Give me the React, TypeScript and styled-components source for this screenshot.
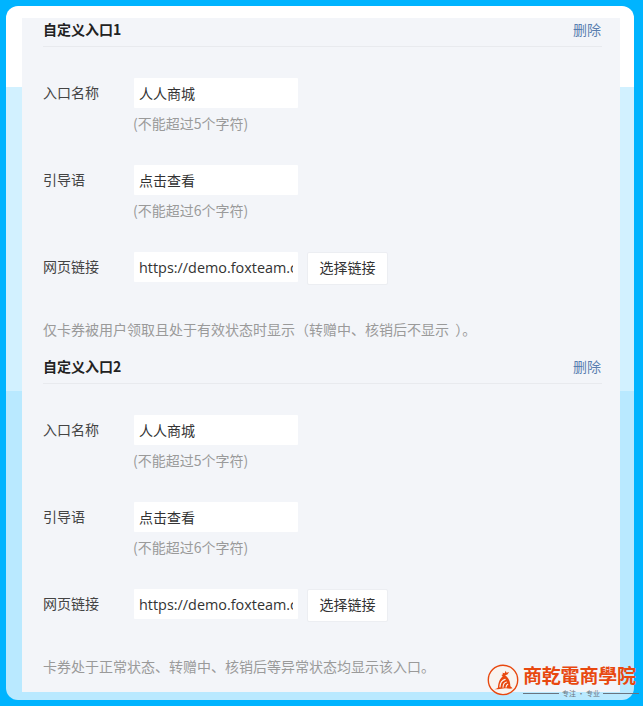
import React from "react";
import styled, { createGlobalStyle } from "styled-components";

const Global = createGlobalStyle`
  html, body { margin: 0; padding: 0; background: #00b4ff; }
  body { font-family: "Open Sans", "Noto Sans CJK SC", sans-serif; font-size: 14px; }
`;

const Frame = styled.div`
  position: relative;
  box-sizing: border-box;
  width: 643px;
  height: 706px;
  overflow: hidden;
  background: #00b4ff;
  padding: 6px 9px 6px 6px;
`;

const Screen = styled.div`
  box-sizing: border-box;
  height: 694px;
  border-radius: 12px;
  overflow: hidden;
  padding: 12px 14px 8px 16px;
  background: linear-gradient(
    to bottom,
    #ffffff 0 81px,
    #d2f1ff 81px 385px,
    #b9e9ff 385px 100%
  );
`;

const Card = styled.div`
  box-sizing: border-box;
  height: 674px;
  overflow: hidden;
  padding: 0 18px 0 21px;
  background: #f3f5f9;
`;

const Section = styled.section`
  height: 337px;
`;

const Head = styled.div`
  box-sizing: border-box;
  height: 29px;
  display: flex;
  align-items: center;
  justify-content: space-between;
  padding-bottom: 7px;
  border-bottom: 1px solid #e8eaee;
`;

const Title = styled.h3`
  margin: 0;
  font: 700 14px/20px "Noto Sans CJK SC", sans-serif;
  color: #222;
`;

const Remove = styled.a`
  margin-right: 1px;
  font: 400 14px/20px "Noto Sans CJK SC", sans-serif;
  color: #5a7fb0;
`;

const Form = styled.div`
  display: flex;
  flex-direction: column;
  gap: 19px;
  padding-top: 31px;
`;

const Row = styled.div`
  display: flex;
  align-items: flex-start;
  min-height: 68px;
`;

const LinkRow = styled(Row)`
  min-height: 32px;
`;

const Label = styled.label`
  width: 91px;
  flex: none;
  font: 400 14px/28px "Noto Sans CJK SC", sans-serif;
  color: #444;
`;

const Field = styled.div`
  display: flex;
  flex-direction: column;
`;

const Input = styled.input`
  box-sizing: border-box;
  width: 164px;
  height: 30px;
  margin: 0;
  padding: 0 5px 1px;
  border: 0;
  border-radius: 1px;
  outline: none;
  background: #fff;
  color: #333;
  font: 400 14px "Open Sans", "Noto Sans CJK SC", sans-serif;
`;

const UrlInput = styled(Input)`
  padding-bottom: 0;
  font-size: 14.4px;
`;

const Hint = styled.div`
  margin-top: 5px;
  margin-left: -1px;
  font: 400 14px/20px "Noto Sans CJK SC", sans-serif;
  color: #9a9a9a;
`;

const PickButton = styled.button`
  box-sizing: border-box;
  width: 81px;
  height: 33px;
  margin-left: 9px;
  padding: 0 0 3px;
  border: 1px solid #eceef2;
  border-radius: 2px;
  background: #fff;
  color: #333;
  font: 400 14px "Noto Sans CJK SC", sans-serif;
`;

const Note = styled.p`
  margin: 34px 0 0;
  font: 400 14px/20px "Noto Sans CJK SC", sans-serif;
  color: #9a9a9a;
`;

const Logo = styled.div`
  position: absolute;
  left: 487px;
  top: 661px;
  width: 152px;
  height: 40px;
  display: flex;
  gap: 4px;
`;

const LogoText = styled.div`
  display: flex;
  flex-direction: column;
  margin-top: 2px;
`;

const LogoName = styled.div`
  font: 700 19px/24px "Noto Sans CJK TC", sans-serif;
  color: #e8480f;
  white-space: nowrap;
  width: 116px;
  letter-spacing: -0.2px;
`;

const Tagline = styled.div`
  display: flex;
  align-items: center;
  gap: 3px;
  margin-top: 1px;
  font: 400 7px/10px "Noto Sans CJK SC", sans-serif;
  color: #6a7480;
  white-space: nowrap;
  &::before, &::after {
    content: "";
    flex: 1;
    height: 1px;
    background: #6a7480;
  }
`;

const entries = [
  { n: 1, note: "仅卡券被用户领取且处于有效状态时显示（转赠中、核销后不显示\u00a0\u00a0）。" },
  { n: 2, note: "卡券处于正常状态、转赠中、核销后等异常状态均显示该入口。" },
];

const noop = () => {};

export default function App() {
  return (
    <>
      <Global />
      <Frame>
        <Screen>
          <Card>
            {entries.map((e) => (
              <Section key={e.n}>
                <Head>
                  <Title>自定义入口{e.n}</Title>
                  <Remove>删除</Remove>
                </Head>
                <Form>
                  <Row>
                    <Label>入口名称</Label>
                    <Field>
                      <Input value="人人商城" onChange={noop} />
                      <Hint>(不能超过5个字符)</Hint>
                    </Field>
                  </Row>
                  <Row>
                    <Label>引导语</Label>
                    <Field>
                      <Input value="点击查看" onChange={noop} />
                      <Hint>(不能超过6个字符)</Hint>
                    </Field>
                  </Row>
                  <LinkRow>
                    <Label>网页链接</Label>
                    <UrlInput value="https://demo.foxteam.cc/app" onChange={noop} />
                    <PickButton>选择链接</PickButton>
                  </LinkRow>
                </Form>
                <Note>{e.note}</Note>
              </Section>
            ))}
          </Card>
        </Screen>
        <Logo>
          <svg width="37" height="37" viewBox="0 0 37 37" fill="none">
            <circle cx="18.5" cy="19" r="17" fill="#f8f4f0" stroke="#e8480f" strokeWidth="1.6" />
            <path
              d="M8 30c2-.8 3.5-1 4.6-2 .4-5 1.6-10 5.6-13.4l-1.6-1.4 2-.8-.8-1.6 2.6.6 1.2-3 1 2.4 3-1-2 3-2.6.8c4 2.6 6 7.4 6 12.6l2.6 2.4c-2.6.8-5 .4-7.4 0-3.4-.4-6.4.8-9.6 1.2-2 .2-3.2 0-4.6.2z"
              fill="#e8480f"
            />
            <path
              d="M15 27c.2-4 2.4-7.600 6-8.600M18.500 27.400c.2-3 1.500-5.400 4-6M22 27.400c.2-1.500.8-2.800 2-3.400"
              stroke="#f8f4f0"
              strokeWidth="1.300"
              strokeLinecap="round"
            />
          </svg>
          <LogoText>
            <LogoName>商乾電商學院</LogoName>
            <Tagline>专注 · 专业</Tagline>
          </LogoText>
        </Logo>
      </Frame>
    </>
  );
}
